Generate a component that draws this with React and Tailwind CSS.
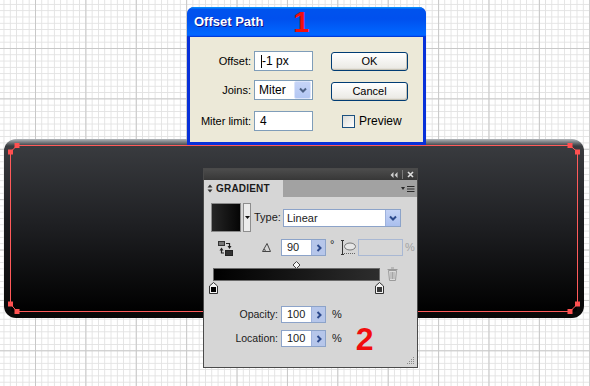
import React from 'react';

function Chevron({ dir = 'down', color = '#4d6185' }) {
  const d = dir === 'down' ? 'M2 3.5 L5 6.5 L8 3.5' : 'M3.5 2 L6.5 5 L3.5 8';
  return (
    <svg width="10" height="10" viewBox="0 0 10 10">
      <path d={d} fill="none" stroke={color} strokeWidth="2" />
    </svg>
  );
}

function XpButton({ children }) {
  return (
    <div className="w-[77px] h-[19px] flex items-center justify-center rounded-[3px] border border-[#003c74] bg-[linear-gradient(180deg,#ffffff,#ecebe6_86%,#d6d0c5)] text-[11px] text-black shadow-[inset_-1px_-1px_#c9c5b7]">
      {children}
    </div>
  );
}

function OffsetPathDialog() {
  return (
    <div className="absolute left-[187px] top-[7px] w-[239px] h-[138px] flex flex-col rounded-t-[7px] bg-[#0831d9] font-['Liberation_Sans',Arial,sans-serif]">
      <div className="h-[30px] shrink-0 flex items-center pl-[7px] rounded-t-[7px] bg-[linear-gradient(180deg,#0997ff,#0053ee_8%,#0050ee_40%,#0066ff_88%,#0066ff_93%,#005bff_95%,#003dd7_96%,#003dd7)]">
        <span className="text-white font-bold text-[13px] [text-shadow:1px_1px_#0f1089]">Offset Path</span>
        <span className="ml-[30px] text-[29px] leading-none font-bold text-[#f10d0d]">1</span>
      </div>
      <div className="flex-1 mx-[3px] mb-[3px] bg-[#ece9d8] text-[11px] text-black">
        {/* Offset */}
        <div className="mt-[14px] h-[20px] flex items-center">
          <span className="w-[61px] text-right">Offset:</span>
          <div className="ml-[3px] w-[59px] h-[20px] border border-[#7f9db9] bg-white flex items-center pl-[6px]">
            <span className="w-px h-[13px] bg-black"></span>
            <span className="text-[12px]">-1 px</span>
          </div>
          <div className="ml-[18px]"><XpButton>OK</XpButton></div>
        </div>
        {/* Joins */}
        <div className="mt-[9px] h-[20px] flex items-center">
          <span className="w-[61px] text-right">Joins:</span>
          <div className="ml-[3px] w-[59px] h-[20px] border border-[#7f9db9] bg-white flex items-center">
            <span className="flex-1 pl-[4px] text-[12px]">Miter</span>
            <div className="w-[17px] h-[18px] mr-px rounded-[2px] bg-[linear-gradient(180deg,#c6d4f7,#b3c7f3)] border border-[#dce5fb] flex items-center justify-center">
              <Chevron />
            </div>
          </div>
          <div className="ml-[18px] mt-[3px]"><XpButton>Cancel</XpButton></div>
        </div>
        {/* Miter limit */}
        <div className="mt-[11px] h-[20px] flex items-center">
          <span className="w-[61px] text-right whitespace-nowrap">Miter limit:</span>
          <div className="ml-[3px] w-[59px] h-[20px] border border-[#7f9db9] bg-white flex items-center pl-[5px] text-[12px]">4</div>
          <div className="ml-[29px] w-[13px] h-[13px] border border-[#1c5180] bg-[linear-gradient(135deg,#dcdcd7,#ffffff)]"></div>
          <span className="ml-[4px] text-[12px]">Preview</span>
        </div>
      </div>
    </div>
  );
}

function PanelInput({ value, arrow = true, disabled = false, w = 'w-[45px]' }) {
  return (
    <div className={`${w} h-[17px] flex border ${disabled ? 'border-[#a9b8d3] bg-[#d6d6d6]' : 'border-[#8ca3c9] bg-white'}`}>
      <span className="flex-1 pl-[5px] text-[11px] leading-[15px]">{value}</span>
      {arrow && (
        <div className="w-[14px] bg-[#b6c6ea] border-l border-[#9eb2dc] flex items-center justify-center">
          <Chevron dir="right" color="#2d4a8c" />
        </div>
      )}
    </div>
  );
}

function StopMarker({ fill }) {
  return (
    <svg width="9" height="12" viewBox="0 0 9 12">
      <path d="M4.5 0.5 L8.5 4 L8.5 11.5 L0.5 11.5 L0.5 4 Z" fill="#f2f2f2" stroke="#333" />
      <rect x="2" y="5" width="5" height="5" fill={fill} />
    </svg>
  );
}

function GradientPanel() {
  return (
    <div className="absolute left-[203px] top-[168px] w-[215px] h-[200px] flex flex-col border border-[#4a4a4a] bg-[#d6d6d6] text-[#1b1b1b] font-['Liberation_Sans',Arial,sans-serif]">
      {/* title bar */}
      <div className="h-[11px] shrink-0 bg-[linear-gradient(180deg,#4c4c4c,#373737)] flex items-center justify-end pr-[3px] gap-[4px]">
        <svg width="8" height="6" viewBox="0 0 8 6"><path d="M3.5 0 L0.5 3 L3.5 6 Z M7.5 0 L4.5 3 L7.5 6 Z" fill="#cfcfcf" /></svg>
        <span className="w-px h-[9px] bg-[#7a7a7a]"></span>
        <svg width="7" height="7" viewBox="0 0 7 7"><path d="M1 1 L6 6 M6 1 L1 6" stroke="#dedede" strokeWidth="1.6" /></svg>
      </div>
      {/* tab row */}
      <div className="h-[17px] shrink-0 flex bg-[#a2a2a2]">
        <div className="w-[79px] bg-[#d6d6d6] flex items-center pl-[3px] gap-[3px]">
          <svg width="6" height="9" viewBox="0 0 6 9"><path d="M3 0.5 L5.5 3.5 L0.5 3.5 Z M3 8.5 L5.5 5.5 L0.5 5.5 Z" fill="#333" /></svg>
          <span className="text-[10px] font-bold tracking-[0.2px]">GRADIENT</span>
        </div>
        <div className="flex-1 flex items-center justify-end pr-[2px]">
          <svg width="14" height="8" viewBox="0 0 14 8">
            <path d="M0 2 L4 2 L2 5 Z" fill="#2a2a2a" />
            <path d="M6 1.5 H13.5 M6 4 H13.5 M6 6.5 H13.5" stroke="#2a2a2a" strokeWidth="1.2" />
          </svg>
        </div>
      </div>
      {/* body */}
      <div className="flex-1 relative">
        {/* swatch + type */}
        <div className="mt-[6px] flex items-center">
          <div className="ml-[7px] w-[30px] h-[29px] border border-[#8a8a8a] bg-[linear-gradient(90deg,#262626,#050505)]"></div>
          <div className="ml-[2px] w-[8px] h-[29px] border border-[#8e8e8e] bg-[#ececec] flex items-center justify-center">
            <svg width="5" height="3" viewBox="0 0 5 3"><path d="M0 0 L5 0 L2.5 3 Z" fill="#111" /></svg>
          </div>
          <span className="ml-[3px] w-[29px] text-[11px]">Type:</span>
          <div className="w-[118px] h-[18px] flex border border-[#8ca3c9] bg-white">
            <span className="flex-1 pl-[3px] text-[11px] leading-[16px]">Linear</span>
            <div className="w-[15px] bg-[linear-gradient(180deg,#c4d3f6,#aabfee)] border-l border-[#9eb2dc] flex items-center justify-center">
              <Chevron color="#2d4a8c" />
            </div>
          </div>
        </div>
        {/* angle row */}
        <div className="mt-[7px] h-[17px] flex items-center">
          <svg className="ml-[14px]" width="15" height="16" viewBox="0 0 15 16">
            <rect x="0.5" y="1.5" width="6" height="4" fill="#777" stroke="#333" />
            <path d="M8 3.5 H11.5 V7" fill="none" stroke="#222" strokeWidth="1.2" />
            <path d="M9.5 6 L13.5 6 L11.5 9 Z" fill="#222" />
            <rect x="7.5" y="10.5" width="7" height="5" fill="#333" stroke="#222" />
            <path d="M6 13 H3.5 V9.5" fill="none" stroke="#222" strokeWidth="1.2" />
            <path d="M1.5 10.5 L5.5 10.5 L3.5 7.5 Z" fill="#222" />
          </svg>
          <svg className="ml-[29px]" width="9" height="9" viewBox="0 0 9 9">
            <path d="M0.5 8.5 L8.5 8.5 L5 0.5 Z" fill="none" stroke="#444" />
            <path d="M3 8.5 A2 2 0 0 0 2.3 6" fill="none" stroke="#444" />
          </svg>
          <div className="ml-[10px]"><PanelInput value="90" /></div>
          <span className="w-[14px] pl-[4px] self-start -mt-[3px] text-[11px]">°</span>
          <svg width="16" height="17" viewBox="0 0 16 17">
            <path d="M1 1.5 H4 M2.5 1.5 V15.5 M1 15.5 H4" stroke="#333" strokeWidth="1" fill="none" />
            <ellipse cx="10" cy="7.5" rx="5.5" ry="3.5" fill="#e6e6e6" stroke="#777" />
            <path d="M4 14.5 H15" stroke="#666" strokeDasharray="1 1" />
          </svg>
          <div className="ml-[2px]"><PanelInput value="" arrow={false} disabled /></div>
          <span className="ml-[2px] text-[11px] text-[#a3a3a3]">%</span>
        </div>
        {/* gradient slider */}
        <div className="mt-[6px] flex items-start">
          <div className="ml-[9px] relative w-[167px] h-[32px]">
            <svg className="absolute left-[79px] top-[-1px]" width="9" height="8" viewBox="0 0 9 8">
              <path d="M4.5 0.5 L8 4 L4.5 7.5 L1 4 Z" fill="#f5f5f5" stroke="#444" />
            </svg>
            <div className="absolute left-0 top-[6px] w-[167px] h-[13px] border border-[#6a6a6a] bg-[linear-gradient(90deg,#000000,#2d2d2d)]"></div>
            <div className="absolute left-[-4px] top-[20px]"><StopMarker fill="#000" /></div>
            <div className="absolute right-[-4px] top-[20px]"><StopMarker fill="#3a3a3a" /></div>
          </div>
          <svg className="ml-[7px] mt-[5px]" width="11" height="14" viewBox="0 0 11 14">
            <path d="M4 1 H7 M0.5 2.5 H10.5" stroke="#9a9a9a" strokeWidth="1.2" />
            <path d="M1.5 3.5 L2.5 13.5 H8.5 L9.5 3.5 Z" fill="#dcdcdc" stroke="#9a9a9a" />
            <path d="M4 5 V12 M5.5 5 V12 M7 5 V12" stroke="#a5a5a5" />
          </svg>
        </div>
        {/* opacity */}
        <div className="mt-[12px] h-[17px] flex items-center">
          <span className="w-[74px] text-right text-[10.5px]">Opacity:</span>
          <div className="ml-[3px]"><PanelInput value="100" /></div>
          <span className="ml-[6px] text-[11px]">%</span>
        </div>
        {/* location */}
        <div className="mt-[7px] h-[17px] flex items-center">
          <span className="w-[74px] text-right text-[10.5px]">Location:</span>
          <div className="ml-[3px]"><PanelInput value="100" /></div>
          <span className="ml-[6px] text-[11px]">%</span>
          <span className="ml-[14px] text-[32px] leading-none font-bold text-[#f10d0d]">2</span>
        </div>
        {/* resize grip */}
        <svg className="absolute right-[2px] bottom-[2px]" width="9" height="9" viewBox="0 0 9 9" fill="#8a8a8a">
          <rect x="7" y="1" width="1" height="1" />
          <rect x="5" y="3" width="1" height="1" /><rect x="7" y="3" width="1" height="1" />
          <rect x="3" y="5" width="1" height="1" /><rect x="5" y="5" width="1" height="1" /><rect x="7" y="5" width="1" height="1" />
          <rect x="1" y="7" width="1" height="1" /><rect x="3" y="7" width="1" height="1" /><rect x="5" y="7" width="1" height="1" /><rect x="7" y="7" width="1" height="1" />
        </svg>
      </div>
    </div>
  );
}

function BlackButtonShape() {
  const pts = [[13, 6.5], [566, 6.5], [573.5, 13], [573.5, 165], [566, 172.5], [13, 172.5], [6.5, 165], [6.5, 13]];
  return (
    <div className="absolute left-[4px] top-[139px] w-[580px] h-[179px] rounded-[12px] flex pt-[7px] pb-[6px] px-[7px] bg-[linear-gradient(180deg,#b3b7bb_0px,#7d8185_3px,#3a3c40_7px,#1c1d20_45%,#070707_100%)]">
      <div className="flex-1 rounded-[3px] bg-[linear-gradient(180deg,#393b3f,#1d1e21_50%,#000000)]"></div>
      <svg className="absolute left-0 top-0" width="580" height="179" viewBox="0 0 580 179">
        <polygon points={pts.map(p => p.join(',')).join(' ')} fill="none" stroke="#ff5a5a" strokeWidth="1" />
        {pts.map((p, i) => (
          <rect key={i} x={p[0] - 2.5} y={p[1] - 2.5} width="5" height="5" fill="#ff5050" />
        ))}
      </svg>
    </div>
  );
}

export default function App() {
  return (
    <div className="relative w-[590px] h-[386px] overflow-hidden bg-white [background-image:linear-gradient(90deg,#c8c8c8_1px,transparent_1px),linear-gradient(180deg,#c8c8c8_1px,transparent_1px),linear-gradient(90deg,#e2e2e2_1px,transparent_1px),linear-gradient(180deg,#e2e2e2_1px,transparent_1px)] [background-size:50.4px_50.4px,50.4px_50.4px,6.3px_6.3px,6.3px_6.3px] [background-position:35px_48px,35px_48px,35px_48px,35px_48px]">
      <BlackButtonShape />
      <OffsetPathDialog />
      <GradientPanel />
    </div>
  );
}
